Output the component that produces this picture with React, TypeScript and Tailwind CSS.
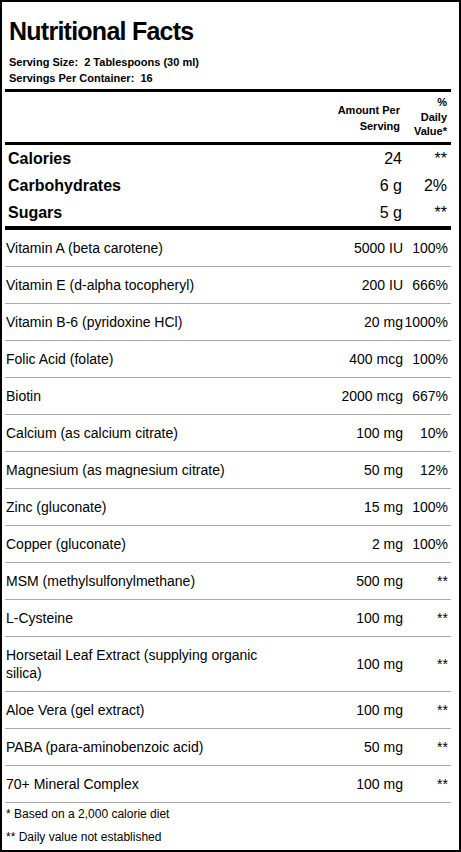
const nutrients: [string, string, string][] = [
  ["Vitamin A (beta carotene)", "5000 IU", "100%"],
  ["Vitamin E (d-alpha tocopheryl)", "200 IU", "666%"],
  ["Vitamin B-6 (pyridoxine HCl)", "20 mg", "1000%"],
  ["Folic Acid (folate)", "400 mcg", "100%"],
  ["Biotin", "2000 mcg", "667%"],
  ["Calcium (as calcium citrate)", "100 mg", "10%"],
  ["Magnesium (as magnesium citrate)", "50 mg", "12%"],
  ["Zinc (gluconate)", "15 mg", "100%"],
  ["Copper (gluconate)", "2 mg", "100%"],
  ["MSM (methylsulfonylmethane)", "500 mg", "**"],
  ["L-Cysteine", "100 mg", "**"],
  ["Horsetail Leaf Extract (supplying organic silica)", "100 mg", "**"],
  ["Aloe Vera (gel extract)", "100 mg", "**"],
  ["PABA (para-aminobenzoic acid)", "50 mg", "**"],
  ["70+ Mineral Complex", "100 mg", "**"],
]

const macros: [string, string, string][] = [
  ["Calories", "24", "**"],
  ["Carbohydrates", "6 g", "2%"],
  ["Sugars", "5 g", "**"],
]

export default function App() {
  return (
    <div
      className="w-[461px] h-[852px] border-2 border-black bg-white text-black pl-[3px] pr-[8px] overflow-hidden"
      style={{ fontFamily: '"Liberation Sans", Arial, sans-serif' }}
    >
      <h1 className="pl-[4px] pt-[14px] text-[25px] leading-[30px] font-bold tracking-[-0.75px]">Nutritional Facts</h1>
      <div className="pl-[4px] mt-[8px] mb-[3px] text-[11px] leading-[16px] font-bold">
        <div>Serving Size:&nbsp; 2 Tablespoons (30 ml)</div>
        <div>Servings Per Container:&nbsp; 16</div>
      </div>
      <div className="h-[3px] bg-black" />
      <div className="h-[50px] flex items-center justify-end pr-[4px] text-[11px] font-bold text-right">
        <div className="leading-[16px] mt-[2px]">Amount Per<br />Serving</div>
        <div className="w-[47px] leading-[14.5px]">%<br />Daily<br />Value*</div>
      </div>
      <div className="h-[3px] bg-black" />
      <div className="pl-[3px] pr-[4px]">
        {macros.map(([name, amt, pct]) => (
          <div key={name} className="h-[27px] flex items-center text-[16px]">
            <div className="flex-1 font-bold">{name}</div>
            <div className="text-right">{amt}</div>
            <div className="w-[45px] text-right">{pct}</div>
          </div>
        ))}
      </div>
      <div className="h-[4px] bg-black" />
      {nutrients.map(([name, amt, pct]) => (
        <div key={name} className="flex items-center py-[9px] pl-[1px] pr-[3px] text-[14px] leading-[18px] border-b border-[#aaaaaa]">
          <div className="flex-none w-[275px]">{name}</div>
          <div className="flex-1 text-right whitespace-nowrap">{amt}</div>
          <div className="w-[45px] text-right">{pct}</div>
        </div>
      ))}
      <div className="pl-[1px] text-[12px] leading-[23px]">
        <div>* Based on a 2,000 calorie diet</div>
        <div>** Daily value not established</div>
      </div>
    </div>
  )
}
